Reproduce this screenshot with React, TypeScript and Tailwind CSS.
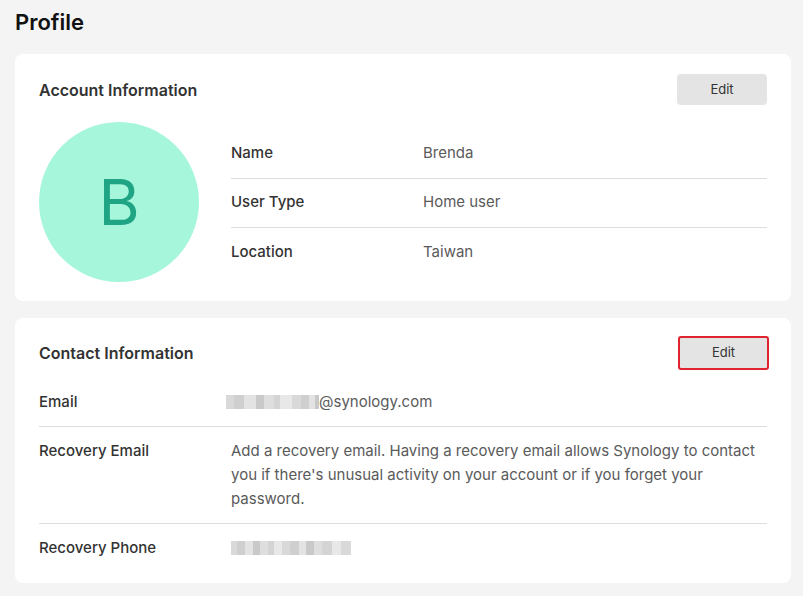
import React from "react";

const font = { fontFamily: "Inter, 'Noto Sans', sans-serif" };

function EditButton({ highlighted }: { highlighted?: boolean }) {
  return (
    <button
      className={
        highlighted
          ? "w-[91px] h-[34px] mr-[-2px] pt-[1px] rounded-[3px] bg-[#e4e4e4] text-[13px] text-[#333] border-2 border-[#e0242f]"
          : "w-[90px] h-[31px] pt-[1px] rounded-[4px] bg-[#e4e4e4] text-[13px] text-[#333]"
      }
    >
      Edit
    </button>
  );
}

function Blur({ widths }: { widths: number[] }) {
  const shades = ["#d9d9d9", "#cfcfcf", "#e3e3e3", "#c9c9c9", "#dedede", "#d4d4d4", "#e8e8e8"];
  return (
    <span className="inline-flex h-[14px] items-stretch align-middle">
      {widths.map((w, i) => (
        <span key={i} style={{ width: w, background: shades[i % shades.length] }} />
      ))}
    </span>
  );
}

export default function App() {
  const account = [
    { label: "Name", value: "Brenda" },
    { label: "User Type", value: "Home user" },
    { label: "Location", value: "Taiwan" },
  ];

  return (
    <div className="w-[803px] h-[596px] bg-[#f4f4f4] px-[15px] pt-[8px] overflow-hidden" style={font}>
      <h1 className="text-[22px] font-semibold text-[#111] leading-[28px]">Profile</h1>

      <div className="mt-[18px] bg-white rounded-[8px] px-[24px] pt-[20px] pb-[19px] w-[776px]">
        <div className="flex justify-between items-center h-[31px]">
          <div className="text-[16px] font-semibold text-[#333]">Account Information</div>
          <EditButton />
        </div>
        <div className="flex items-center mt-[17px] gap-[32px]">
          <div className="w-[160px] h-[160px] rounded-full bg-[#a6f6dc] flex items-center justify-center shrink-0">
            <span className="text-[63px] text-[#1fa584] leading-none">B</span>
          </div>
          <div className="flex-1 pt-[2px]">
            {account.map((row, i) => (
              <div
                key={row.label}
                className={
                  "flex items-center h-[49px] text-[15px] " +
                  (i < account.length - 1 ? "border-b border-[#dedede]" : "")
                }
              >
                <div className="w-[192px] font-medium text-[#333]">{row.label}</div>
                <div className="text-[#5a5a5a]">{row.value}</div>
              </div>
            ))}
          </div>
        </div>
      </div>

      <div className="mt-[17px] bg-white rounded-[8px] px-[24px] pt-[18px] pb-[11px] w-[776px]">
        <div className="flex justify-between items-center h-[33px]">
          <div className="text-[16px] font-semibold text-[#333]">Contact Information</div>
          <EditButton highlighted />
        </div>
        <div className="mt-[9px] text-[15px] leading-[24px]">
          <div className="flex py-[12px] border-b border-[#dedede]">
            <div className="w-[187px] font-medium text-[#333]">Email</div>
            <div className="text-[#5a5a5a] flex items-center">
              <Blur widths={[8, 10, 12, 8, 10, 6, 12, 9, 8, 6, 4]} />
              <span>@synology.com</span>
            </div>
          </div>
          <div className="flex py-[12px] border-b border-[#dedede]">
            <div className="w-[192px] shrink-0 font-medium text-[#333]">Recovery Email</div>
            <div className="text-[#5a5a5a]">
              Add a recovery email. Having a recovery email allows Synology to contact you if there's unusual activity on your account or if you forget your password.
            </div>
          </div>
          <div className="flex py-[12px]">
            <div className="w-[192px] font-medium text-[#333]">Recovery Phone</div>
            <div className="flex items-center">
              <Blur widths={[6, 8, 8, 7, 8, 6, 8, 8, 9, 7, 8, 8, 10, 9, 10]} />
            </div>
          </div>
        </div>
      </div>
    </div>
  );
}
